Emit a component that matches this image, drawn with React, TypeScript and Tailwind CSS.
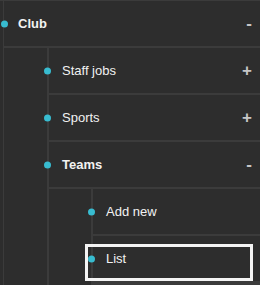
type Node = {
  label: string
  bold?: boolean
  toggle?: '+' | '-'
  focused?: boolean
  children?: Node[]
}

const tree: Node = {
  label: 'Club',
  bold: true,
  toggle: '-',
  children: [
    { label: 'Staff jobs', toggle: '+' },
    { label: 'Sports', toggle: '+' },
    {
      label: 'Teams',
      bold: true,
      toggle: '-',
      children: [{ label: 'Add new' }, { label: 'List', focused: true }]
    }
  ]
}

function Row({ node, root }: { node: Node; root?: boolean }) {
  return (
    <div
      className={`relative flex h-[47px] items-center border-b-2 border-[#3b3b3b] pr-[8px] ${
        root ? 'pl-[14px]' : 'pl-[13px]'
      }`}
    >
      <span
        className={`absolute top-1/2 size-[7px] -translate-y-1/2 rounded-full bg-[#38bcd0] ${
          root ? 'left-[-3px]' : 'left-[-5px]'
        }`}
      />
      {node.focused && (
        <span className="absolute top-[8px] bottom-0 left-[-8px] right-[7px] border-[3px] border-[#f4f4f4]" />
      )}
      <span className={node.bold ? 'font-bold' : ''}>{node.label}</span>
      {node.toggle && (
        <span className="ml-auto text-[17px] font-bold leading-none text-[#c6c6c6]">
          {node.toggle}
        </span>
      )}
    </div>
  )
}

function Item({ node, root, indent }: { node: Node; root?: boolean; indent?: string }) {
  return (
    <div>
      <Row node={node} root={root} />
      {node.children && (
        <div className={`${indent} border-l-2 border-b-2 border-[#3b3b3b]`}>
          {node.children.map((child) => (
            <Item key={child.label} node={child} indent="ml-[42px]" />
          ))}
        </div>
      )}
    </div>
  )
}

export default function App() {
  return (
    <div className="h-[285px] w-[260px] overflow-hidden bg-[#2d2d2d] font-['Liberation_Sans',Arial,sans-serif] text-[13px] text-[#f2f2f2]">
      <div className="min-h-[285px] border-t border-[#3b3b3b]">
        <div className="ml-[3px] min-h-[284px] border-l border-[#3b3b3b]">
          <Item node={tree} root indent="ml-[43px]" />
        </div>
      </div>
    </div>
  )
}
